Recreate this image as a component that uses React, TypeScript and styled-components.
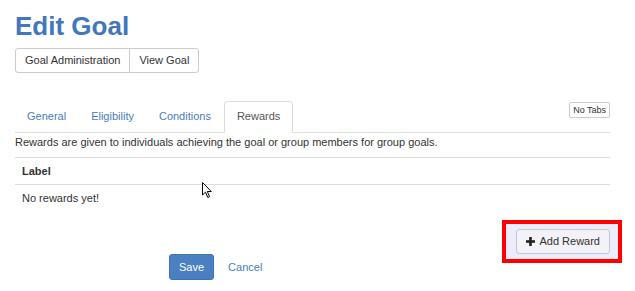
import React from "react";
import styled, { createGlobalStyle, css } from "styled-components";

const GlobalStyle = createGlobalStyle`
  html, body { margin: 0; padding: 0; background: #fff; }
  body {
    font-family: "Liberation Sans", Arial, Helvetica, sans-serif;
    font-size: 11px;
    color: #333;
  }
  * { box-sizing: border-box; }
`;

const Page = styled.div`
  position: relative;
  width: 635px;
  height: 291px;
  padding: 0 25px 0 15px;
  overflow: hidden;
`;

const Title = styled.h1`
  margin: 11px 0 7px;
  font-size: 26px;
  line-height: 30px;
  font-weight: bold;
  color: #4277bd;
`;

const ButtonGroup = styled.div`
  display: flex;
  width: fit-content;
`;

const GroupButton = styled.button`
  font: inherit;
  font-size: 11px;
  line-height: 13px;
  padding: 5px 9px;
  border: 1px solid #ccc;
  background: #fff;
  color: #333;
  &:first-child { border-radius: 3px 0 0 3px; }
  &:last-child { border-radius: 0 3px 3px 0; margin-left: -1px; }
`;

const TabBar = styled.div`
  display: flex;
  align-items: flex-start;
  margin-top: 28px;
  border-bottom: 1px solid #ddd;
`;

const TabList = styled.ul`
  display: flex;
  list-style: none;
  margin: 0 0 -1px;
  padding: 0;
`;

const Tab = styled.li<{ $active?: boolean }>`
  padding: 8px 11px 9px;
  line-height: 13px;
  margin-right: 1px;
  border: 1px solid transparent;
  border-radius: 4px 4px 0 0;
  color: #4a7dbd;
  ${(p) =>
    p.$active &&
    css`
      padding: 8px 12px 9px;
      color: #555;
      background: #fff;
      border-color: #ddd #ddd transparent;
    `}
`;

const SmallButton = styled.button`
  margin-left: auto;
  margin-top: 1px;
  font: inherit;
  font-size: 9px;
  line-height: 12px;
  padding: 1px 3px;
  border: 1px solid #ccc;
  border-radius: 2px;
  background: #fff;
  color: #333;
`;

const Description = styled.p`
  margin: 1px 0 0;
  line-height: 16px;
`;

const Table = styled.table`
  width: 100%;
  margin-top: 7px;
  border-collapse: collapse;
`;

const Th = styled.th`
  text-align: left;
  font-weight: bold;
  padding: 6px 7px;
  line-height: 14px;
  border-top: 1px solid #ddd;
  border-bottom: 1px solid #ddd;
`;

const Td = styled.td`
  padding: 6px 7px;
  line-height: 14px;
`;

const ActionRow = styled.div`
  display: flex;
  justify-content: flex-end;
  margin-top: 18px;
`;

const HighlightWrap = styled.div`
  position: relative;
  display: flex;
`;

const Highlight = styled.div`
  position: absolute;
  top: -9px;
  bottom: -9px;
  left: -14px;
  right: -12px;
  border: 4px solid #f00;
  background: #ececfb;
`;

const AddButton = styled.button`
  position: relative;
  display: flex;
  align-items: center;
  gap: 4px;
  font: inherit;
  font-size: 11px;
  line-height: 13px;
  padding: 5px 9px;
  border: 1px solid #c6c6d0;
  border-radius: 3px;
  background: #f2f2f8;
  color: #333;
`;

const FormActions = styled.div`
  display: flex;
  align-items: center;
  gap: 14px;
  padding-left: 154px;
`;

const PrimaryButton = styled.button`
  font: inherit;
  font-size: 11px;
  line-height: 13px;
  padding: 6px 9px 5px;
  border: 1px solid #3f74b3;
  border-radius: 3px;
  background: #4a7fc1;
  color: #fff;
`;

const LinkButton = styled.a`
  color: #4a7dbd;
  line-height: 13px;
  cursor: pointer;
`;

const Cursor = styled.svg`
  position: absolute;
  left: 202px;
  top: 182px;
`;

const PlusIcon = () => (
  <svg width="9" height="9" viewBox="0 0 9 9">
    <rect x="3.2" y="0" width="2.6" height="9" fill="#222" />
    <rect x="0" y="3.2" width="9" height="2.6" fill="#222" />
  </svg>
);

export default function App() {
  return (
    <>
      <GlobalStyle />
      <Page>
        <Title>Edit Goal</Title>
        <ButtonGroup>
          <GroupButton>Goal Administration</GroupButton>
          <GroupButton>View Goal</GroupButton>
        </ButtonGroup>
        <TabBar>
          <TabList>
            <Tab>General</Tab>
            <Tab>Eligibility</Tab>
            <Tab>Conditions</Tab>
            <Tab $active>Rewards</Tab>
          </TabList>
          <SmallButton>No Tabs</SmallButton>
        </TabBar>
        <Description>
          Rewards are given to individuals achieving the goal or group members for group goals.
        </Description>
        <Table>
          <thead>
            <tr>
              <Th>Label</Th>
            </tr>
          </thead>
          <tbody>
            <tr>
              <Td>No rewards yet!</Td>
            </tr>
          </tbody>
        </Table>
        <ActionRow>
          <HighlightWrap>
            <Highlight />
            <AddButton>
              <PlusIcon />
              Add Reward
            </AddButton>
          </HighlightWrap>
        </ActionRow>
        <FormActions>
          <PrimaryButton>Save</PrimaryButton>
          <LinkButton>Cancel</LinkButton>
        </FormActions>
        <Cursor width="11" height="17" viewBox="0 0 11 17">
          <path
            d="M0.5 0.5 L0.5 13 L3.5 10.2 L5.8 15.5 L7.6 14.7 L5.3 9.5 L9.3 9.5 Z"
            fill="#fff"
            stroke="#000"
            strokeWidth="1"
            strokeLinejoin="round"
          />
        </Cursor>
      </Page>
    </>
  );
}
